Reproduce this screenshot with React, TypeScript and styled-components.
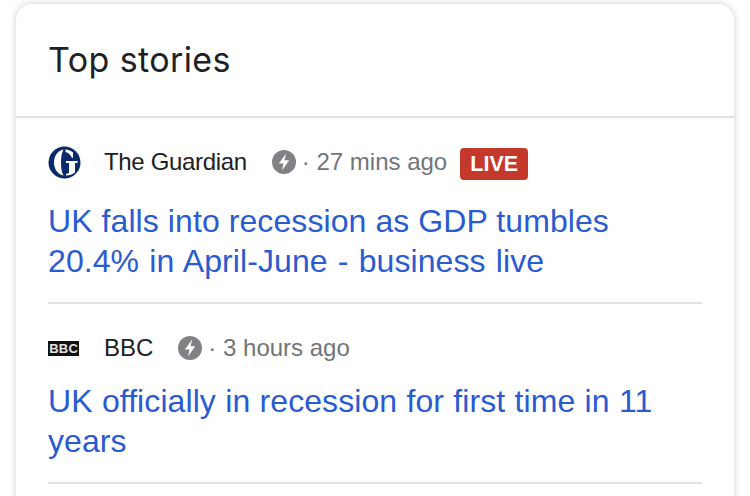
import React from "react";
import styled, { createGlobalStyle } from "styled-components";

const GlobalStyle = createGlobalStyle`
    html, body {
        margin: 0;
        padding: 0;
        background: #fff;
        width: 750px;
        height: 496px;
        overflow: hidden;
    }
`;

const Page = styled.main`
    height: 496px;
    padding: 4px 16px 0;
    box-sizing: border-box;
    overflow: hidden;
    font-family: "Liberation Sans", Arial, sans-serif;
`;

const Card = styled.section`
    background: #fff;
    border-radius: 16px;
    box-shadow: 0 0 7px rgba(60, 64, 67, 0.28);
    height: 600px;
`;

const Header = styled.h2`
    margin: 0;
    height: 112px;
    padding: 0 32px 2px;
    box-sizing: content-box;
    height: 110px;
    display: flex;
    align-items: center;
    border-bottom: 2px solid #dfe1e5;
    font-family: "Inter", sans-serif;
    font-size: 34px;
    font-weight: 400;
    letter-spacing: 0.4px;
    color: #202124;
`;

const List = styled.div`
    padding: 0 32px;
`;

const Story = styled.article`
    height: 186px;
    box-sizing: border-box;
    padding-top: 28px;
    border-bottom: 2px solid #dfe1e5;
    &:nth-child(2) {
        height: 180px;
    }
`;

const Meta = styled.div`
    display: flex;
    align-items: center;
    height: 32px;
    font-size: 24px;
    color: #70757a;
`;

const LogoSlot = styled.div`
    width: 56px;
    flex: none;
    display: flex;
    align-items: center;
`;

const Source = styled.span<{ $tight?: boolean }>`
    color: #202124;
    margin-right: 25px;
    letter-spacing: ${(p) => (p.$tight ? "-0.33px" : "0")};
`;

const Amp = styled.svg`
    width: 24px;
    height: 24px;
    flex: none;
    margin-right: 6px;
`;

const LiveBadge = styled.span`
    margin: 4px 0 0 13px;
    height: 32px;
    width: 68px;
    border-radius: 4px;
    background: #c5382c;
    color: #fff;
    font-size: 21.5px;
    font-weight: 700;
    display: flex;
    align-items: center;
    justify-content: center;
`;

const Headline = styled.a`
    display: block;
    margin-top: 23px;
    font-size: 32px;
    line-height: 40px;
    letter-spacing: 0.08px;
    color: #2a5bd0;
    text-decoration: none;
    article:nth-child(2) & {
        margin-top: 17px;
    }
`;

const HeadlineLine = styled.span<{ $spread?: number }>`
    display: block;
    word-spacing: ${(p) => p.$spread ?? 0}px;
`;

const BbcLogo = styled.div`
    display: flex;
    width: 31px;
    height: 15px;
    background: #111;
    padding: 0 1px;
    box-sizing: border-box;
    align-items: center;
`;

const BbcLetter = styled.span`
    flex: 1;
    color: #e4e4e4;
    font-size: 13px;
    font-weight: 700;
    line-height: 15px;
    text-align: center;
`;

function AmpIcon() {
    return (
        <Amp viewBox="0 0 24 24">
            <circle cx="12" cy="12" r="12" fill="#808285" />
            <path d="M14.2 3.500 6.800 13.600h4.700L10 20.500l7.200-10.200h-4.700z" fill="#fff" />
        </Amp>
    );
}

function GuardianLogo() {
    return (
        <svg width="33" height="33" viewBox="0 0 33 33">
            <circle cx="16.500" cy="16.500" r="16" fill="#0a2a6b" />
            <path d="M15.500 3.500C9 5 6 10.500 6 16.500S9 28 15.500 29.500C13.500 26 13 21 13 16.500S13.500 7 15.500 3.500z" fill="#fff" />
            <path d="M17.500 3.500c3 .2 5.500 1.300 7.500 3v5.500h-1c-1-3-3.500-5.300-6.500-6z" fill="#fff" />
            <path d="M18 15h11.500v2H27v9.500c-2.500 2-5.500 3-9 3V28c1.500-.3 2.500-.7 3-1.200V17h-3z" fill="#fff" />
        </svg>
    );
}

export default function App() {
    return (
        <>
            <GlobalStyle />
            <Page>
                <Card>
                    <Header>Top stories</Header>
                    <List>
                        <Story>
                            <Meta>
                                <LogoSlot><GuardianLogo /></LogoSlot>
                                <Source $tight>The Guardian</Source>
                                <AmpIcon />
                                <span>· 27 mins ago</span>
                                <LiveBadge>LIVE</LiveBadge>
                            </Meta>
                            <Headline href="#">
                                <HeadlineLine>UK falls into recession as GDP tumbles</HeadlineLine>
                                <HeadlineLine $spread={1.2}>20.4% in April-June - business live</HeadlineLine>
                            </Headline>
                        </Story>
                        <Story>
                            <Meta>
                                <LogoSlot>
                                    <BbcLogo>
                                        <BbcLetter>B</BbcLetter>
                                        <BbcLetter>B</BbcLetter>
                                        <BbcLetter>C</BbcLetter>
                                    </BbcLogo>
                                </LogoSlot>
                                <Source>BBC</Source>
                                <AmpIcon />
                                <span>· 3 hours ago</span>
                            </Meta>
                            <Headline href="#">
                                <HeadlineLine $spread={0.3}>UK officially in recession for first time in 11</HeadlineLine>
                                <HeadlineLine>years</HeadlineLine>
                            </Headline>
                        </Story>
                    </List>
                </Card>
            </Page>
        </>
    );
}
